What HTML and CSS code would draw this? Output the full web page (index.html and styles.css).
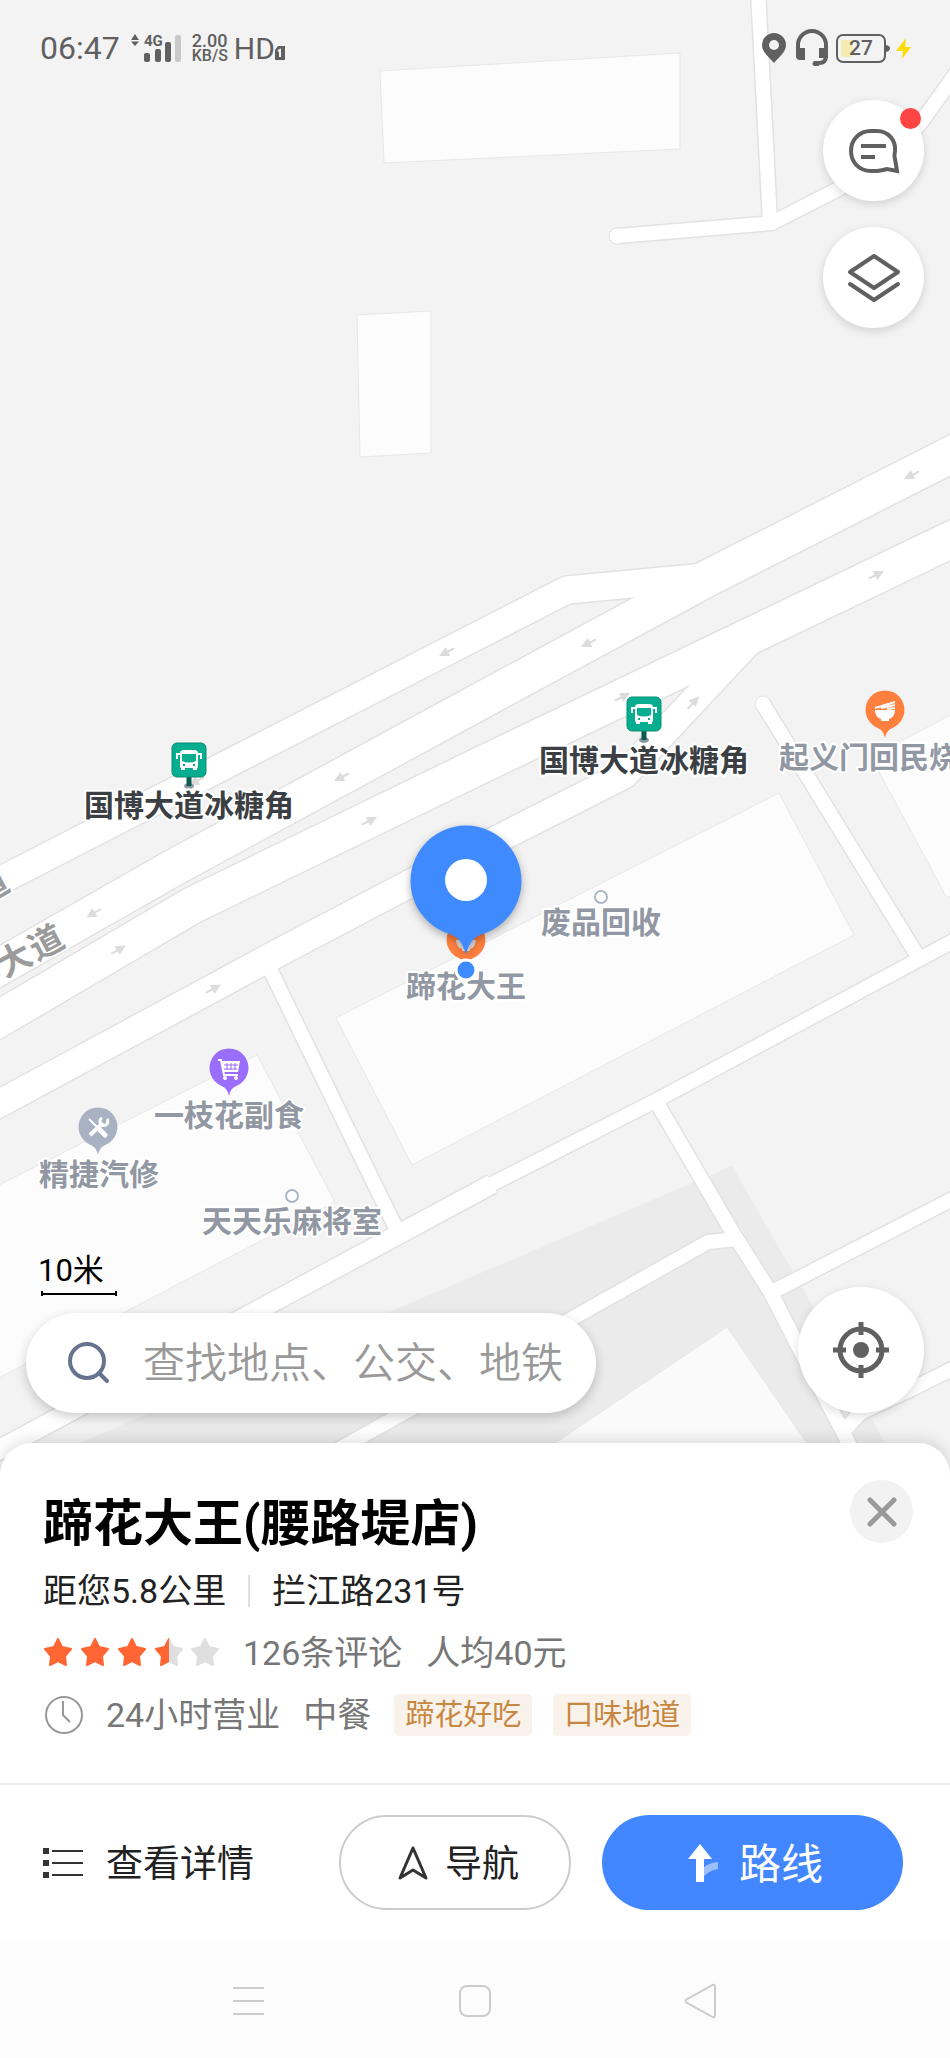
FILE: index.html
```html
<!doctype html>
<html lang="zh-CN">

<head>
    <meta charset="UTF-8">
    <title>蹄花大王(腰路堤店)</title>
    <meta name="viewport" content="width=device-width, initial-scale=1">
    <link rel="stylesheet" href="styles.css">
</head>

<body>
    <div class="page">

        <section class="map">
            <svg class="map-bg" viewBox="0 0 950 1475" preserveAspectRatio="xMidYMin slice">
                <defs>
                    <g id="arrow">
                        <path d="M-8 0H0" stroke="#dcdcdc" stroke-width="2" />
                        <path d="M9 0L-1 -5V5Z" fill="#dcdcdc" />
                    </g>
                    <path id="pin" d="M0 28C-2 19 -6 19 -11 16A19.500 19.500 0 1 1 11 16C6 19 2 19 0 28Z" />
                    <g id="bus">
                        <ellipse cx="0" cy="26" rx="5" ry="3" fill="#8b97a0" />
                        <path d="M0 16V26" stroke="#0c5a50" stroke-width="5" />
                        <rect x="-17" y="-17" width="34" height="34" rx="5" fill="#06ad8f" stroke="#058f77" />
                        <path d="M-9 -7Q-9 -10 -5 -10H5Q9 -10 9 -7V6Q9 8 8 8V10H4V8H-4V10H-8V8Q-9 8 -9 6Z" fill="#fff" />
                        <path d="M-9 -6H-12V-1M9 -6H12V-1" fill="none" stroke="#fff" stroke-width="2" />
                        <path d="M-7 -6H7V1Q0 4 -7 1Z" fill="#06ad8f" />
                        <path d="M-6 5H-4M4 5H6" stroke="#06ad8f" stroke-width="2" />
                    </g>
                    <g id="roads" fill="none" stroke-linejoin="round">
                        <path class="w36" d="M-20 978L173 868L475 704L708 578L990 435M-20 1030L193 905L475 768L990 521" />
                        <path class="w27" d="M-20 891L475 637L567 590L705 577M-20 1114L278 953L413 882L624 775L756 634" />
                        <path class="w19" d="M-20 1460L492 1184" />
                        <path class="w14" d="M758 -9L770 222M617 236L772 223L885 165L922 121L960 68M268 965L348 1130L398 1232M492 1184L657 1100L970 932M763 704L917 955M657 1103L733 1233L771 1293L795 1340L843 1432L862 1470M774 1291L970 1190M738 1239L708 1242L571 1319L300 1471M843 1432L860 1413L912 1389L970 1360" />
                    </g>
                </defs>

                <!-- 地块和建筑 -->
                <rect width="950" height="1475" fill="#f3f3f3" />
                <path d="M732 1166L387 1313L138 1418L40 1460V1480H904L812 1305Z" fill="#ebebeb" />
                <g fill="#fcfcfc" stroke="#e7e7e7">
                    <path d="M380 71L680 53V149L384 163Z" />
                    <path d="M357 315L431 311V453L360 457Z" />
                    <path d="M336 1018L779 793L854 935L412 1165Z" />
                    <path d="M-5 1187L257 1055L335 1202L-5 1380Z" />
                    <path d="M960 710L871 757L947 898L960 891Z" />
                    <path d="M727 1327L505 1477H830Z" fill="#fbfafb" />
                </g>

                <!-- 道路 -->
                <use href="#roads" class="road-edge" />
                <g fill="#fff" stroke="#e2e2e2">
                    <circle cx="617" cy="236" r="8" />
                    <circle cx="763" cy="704" r="8" />
                </g>
                <use href="#roads" class="road-fill" />

                <use href="#arrow" transform="translate(447 652) rotate(153)" />
                <use href="#arrow" transform="translate(342 777) rotate(153)" />
                <use href="#arrow" transform="translate(197 781) rotate(153)" />
                <use href="#arrow" transform="translate(589 643) rotate(153)" />
                <use href="#arrow" transform="translate(912 475) rotate(153)" />
                <use href="#arrow" transform="translate(94 913) rotate(150)" />
                <use href="#arrow" transform="translate(369 821) rotate(-27)" />
                <use href="#arrow" transform="translate(876 575) rotate(-27)" />
                <use href="#arrow" transform="translate(622 697) rotate(-27)" />
                <use href="#arrow" transform="translate(693 703) rotate(-48)" />
                <use href="#arrow" transform="translate(118 950) rotate(-30)" />
                <use href="#arrow" transform="translate(213 989) rotate(-28)" />

                <text class="street" x="-140 -104 -68 -32" transform="translate(65 946) rotate(-28)">国博大道</text>
                <text class="street" x="-140 -104 -68 -32" transform="translate(10 890) rotate(-28)">国博大道</text>

                <!-- 兴趣点 -->
                <use href="#bus" x="189" y="760" />
                <text class="stop" x="189" y="816">国博大道冰糖角</text>
                <use href="#bus" x="644" y="714" />
                <text class="stop" x="644" y="771">国博大道冰糖角</text>

                <g transform="translate(885 710)">
                    <use href="#pin" fill="#ff7f3e" />
                    <path d="M-10 0H10Q10 7 4 9V11H-4V9Q-10 7 -10 0Z" fill="#fff" />
                    <path d="M-10 -2L10 -8M-4 -2L10 -5M2 -1L10 -2" stroke="#fff" stroke-width="2" />
                </g>
                <text class="poi poi-start" x="779" y="768">起义门回民烧烤</text>

                <g fill="#fff" stroke="#acb6c9" stroke-width="2">
                    <circle cx="601" cy="897" r="6" />
                    <circle cx="292" cy="1196" r="6" />
                </g>
                <text class="poi" x="601" y="933">废品回收</text>
                <text class="poi" x="292" y="1232">天天乐麻将室</text>

                <g transform="translate(229 1068)">
                    <use href="#pin" fill="#9b6dfb" />
                    <path d="M-11 -8H-8L-5 7H9" fill="none" stroke="#fff" stroke-width="2" />
                    <path d="M-7 -7H11L9 4H-5Z" fill="#fff" />
                    <path d="M-2 -5V2M2 -5V2M6 -5V2M-5 -3H9M-5 1H8" stroke="#9b6dfb" />
                    <circle cx="-4" cy="10" r="2" fill="#fff" />
                    <circle cx="7" cy="10" r="2" fill="#fff" />
                </g>
                <text class="poi" x="229" y="1126">一枝花副食</text>

                <g transform="translate(98 1127)">
                    <use href="#pin" fill="#a9b2c3" />
                    <path d="M-9 -8L-1 0" stroke="#fff" stroke-width="2" />
                    <path d="M2 3L7 8" stroke="#fff" stroke-width="5" stroke-linecap="round" />
                    <path d="M-8 8L5 -4" stroke="#fff" stroke-width="4" />
                    <path d="M9 -8A4 4 0 1 1 4 -9" fill="none" stroke="#fff" stroke-width="3" />
                </g>
                <text class="poi" x="99" y="1185">精捷汽修</text>

                <!-- 当前选中的点 -->
                <g transform="translate(466 940)">
                    <use href="#pin" fill="#ff7f3e" />
                    <path d="M-10 0H10Q9 8 4 9V11H-4V9Q-9 8 -10 0Z" fill="#e5e0dc" />
                </g>
                <text class="poi" x="466" y="997">蹄花大王</text>
                <path class="marker" d="M466 954C461 938 456 936 444 932A55.500 55.500 0 1 1 488 932C476 936 471 938 466 954Z" />
                <circle cx="466" cy="880" r="21" fill="#fff" />
                <circle cx="466" cy="970" r="10" fill="#3f8aff" stroke="#fff" stroke-width="3" />
            </svg>

            <header class="status">
                <span class="time">06:47</span>
                <svg class="signal" width="40" height="32" viewBox="0 0 40 32">
                    <path d="M4 2L8 8H0ZM4 14L8 9.500H0Z" />
                    <text x="13" y="14">4G</text>
                    <rect x="13" y="21" width="6" height="9" rx="2" />
                    <rect x="24" y="17" width="6" height="13" rx="2" />
                    <rect x="34" y="10" width="6" height="20" rx="2" />
                </svg>
                <svg class="signal-off" width="7" height="32" viewBox="0 0 7 32">
                    <rect y="3" width="6" height="27" rx="2" fill="#c9c9c9" />
                </svg>
                <span class="speed"><b>2.00</b><span>KB/S</span></span>
                <span class="hd">HD</span>
                <svg class="sim" width="10" height="14" viewBox="0 0 10 14">
                    <path d="M3 0H10V14H0V4Z" fill="#606060" />
                    <path d="M3 5L5 4V11" fill="none" stroke="#f3f3f3" stroke-width="2" />
                </svg>
                <svg class="status-right" width="150" height="40" viewBox="0 0 150 40">
                    <path fill-rule="evenodd" d="M12 5A12 12 0 0 0 0 17C0 24 7 29 12 35C17 29 24 24 24 17A12 12 0 0 0 12 5ZM12 12A5 5 0 1 1 12 22A5 5 0 0 1 12 12Z" fill="#606060" />
                    <path d="M36 21V17A14 14 0 0 1 64 17V28Q64 35 57 35H53" fill="none" stroke="#606060" stroke-width="4" />
                    <path d="M34 20H43V32H38Q34 32 34 28ZM57 20H66V30H57ZM52 33H57V38H52Q49 36 52 33Z" fill="#606060" />
                    <rect x="79" y="12" width="12" height="17" rx="2" fill="#f7ecb0" />
                    <rect x="75" y="7" width="48" height="27" rx="6" fill="none" stroke="#606060" stroke-width="2" />
                    <path d="M124 17Q128 18 128 20Q128 23 124 24Z" fill="#606060" />
                    <text x="99" y="27" text-anchor="middle">27</text>
                    <path d="M144 10L134 23H141L140 31L149 19H143Z" fill="#ffdc00" />
                </svg>
            </header>

            <div class="tools">
                <button class="round" aria-label="消息">
                    <svg width="52" height="46" viewBox="0 0 52 46" fill="none" stroke="#606060" stroke-width="4">
                        <path d="M23 3H29C40 3 48 12 47 23Q46 29 47 31L49 43L39 41Q36 42 29 43H23C11 43 3 34 3 23S11 3 23 3Z" />
                        <path d="M13 18H38M13 29H27" />
                    </svg>
                    <span class="dot"></span>
                </button>
                <button class="round" aria-label="图层">
                    <svg width="54" height="50" viewBox="0 0 54 50" fill="none" stroke="#606060" stroke-width="4" stroke-linecap="round" stroke-linejoin="round">
                        <path d="M27 3L51 19L27 35L3 19Z" />
                        <path d="M3 31L27 47L51 31" />
                    </svg>
                </button>
            </div>

            <div class="map-foot">
                <div class="foot-left">
                    <div class="scale">10米<i></i></div>
                    <label class="search">
                        <svg width="42" height="42" viewBox="0 0 42 42" fill="none" stroke="#66738f" stroke-width="4" stroke-linecap="round">
                            <circle cx="19" cy="19" r="17" />
                            <path d="M31 31L39 39" />
                        </svg>
                        <input type="text" placeholder="查找地点、公交、地铁" aria-label="搜索">
                    </label>
                </div>
                <button class="round locate" aria-label="定位">
                    <svg width="56" height="56" viewBox="0 0 56 56" fill="none" stroke="#606060" stroke-width="5">
                        <circle cx="28" cy="28" r="21" />
                        <circle cx="28" cy="28" r="8" fill="#606060" stroke="none" />
                        <path d="M28 0V13M28 43V56M0 28H13M43 28H56" />
                    </svg>
                </button>
            </div>
        </section>

        <section class="sheet">
            <div class="info">
                <div class="head">
                    <h1>蹄花大王(腰路堤店)</h1>
                    <button class="close" aria-label="关闭">
                        <svg width="30" height="30" viewBox="0 0 30 30" stroke="#999" stroke-width="5" stroke-linecap="round">
                            <path d="M3 3L27 27M27 3L3 27" />
                        </svg>
                    </button>
                </div>
                <p class="line addr"><span>距您5.8公里</span><i></i><span>拦江路231号</span></p>
                <p class="line grey">
                    <svg width="176" height="30" viewBox="0 0 176 30">
                        <defs>
                            <path id="star" stroke-width="2" stroke-linejoin="round" d="M15 1L19 9L28 11L22 18L23 27L15 23L7 27L8 18L2 11L11 9Z" />
                            <clipPath id="half"><rect width="15" height="28" /></clipPath>
                        </defs>
                        <g fill="#ff6633" stroke="#ff6633">
                            <use href="#star" />
                            <use href="#star" x="37" />
                            <use href="#star" x="74" />
                        </g>
                        <g fill="#dfdfdf" stroke="#dfdfdf">
                            <use href="#star" x="111" />
                            <use href="#star" x="147" />
                        </g>
                        <g transform="translate(111 0)">
                            <use href="#star" clip-path="url(#half)" fill="#ff6633" stroke="#ff6633" />
                        </g>
                    </svg>
                    <span>126条评论</span><span>人均40元</span>
                </p>
                <p class="line grey">
                    <svg width="40" height="40" viewBox="0 0 40 40" fill="none" stroke="#999" stroke-width="2">
                        <circle cx="21" cy="20" r="18" />
                        <path d="M20 6V20L27 27" />
                    </svg>
                    <span>24小时营业</span><span>中餐</span>
                    <span class="tags"><em>蹄花好吃</em><em>口味地道</em></span>
                </p>
            </div>

            <div class="actions">
                <a class="detail" href="#">
                    <svg width="40" height="30" viewBox="0 0 40 30" fill="#333">
                        <path d="M0 0H6V6H0ZM0 12H6V18H0ZM0 24H6V30H0ZM9 2H40V4H9ZM9 14H40V16H9ZM9 26H40V28H9Z" />
                    </svg>
                    <span>查看详情</span>
                </a>
                <button class="btn navi">
                    <svg width="32" height="36" viewBox="0 0 32 36" fill="none" stroke="#333" stroke-width="3" stroke-linejoin="round">
                        <path d="M16 3L29 33L16 25L3 33Z" />
                    </svg>
                    <span>导航</span>
                </button>
                <button class="btn route">
                    <svg width="30" height="38" viewBox="0 0 30 38">
                        <path d="M15 34V24Q20 19 30 18V25Q19 27 15 34Z" fill="#9cc0ff" />
                        <path d="M12 0L24 15H16V38H8V15H0Z" fill="#fff" />
                    </svg>
                    <span>路线</span>
                </button>
            </div>
        </section>

        <nav class="sysbar">
            <button aria-label="菜单">
                <svg width="34" height="36" viewBox="0 0 34 36"><path d="M1 5H32M1 18H32M1 31H32" /></svg>
            </button>
            <button aria-label="主页">
                <svg width="34" height="36" viewBox="0 0 34 36"><rect x="2" y="3" width="30" height="30" rx="7" /></svg>
            </button>
            <button aria-label="返回">
                <svg width="34" height="36" viewBox="0 0 34 36"><path d="M27 3Q31 0 31 4V32Q31 36 27 33L3 20Q0 18 3 16Z" /></svg>
            </button>
        </nav>

    </div>
</body>

</html>
```
FILE: styles.css
```css
* {
    margin: 0;
    padding: 0;
    box-sizing: border-box;
}

body {
    font-family: Roboto, "Noto Sans CJK SC", sans-serif;
    color: #222;
    background: #fff;
}

button {
    border: none;
    background: none;
    font: inherit;
    color: inherit;
}

svg {
    flex: none;
}

i, em {
    font-style: normal;
}

.page {
    min-height: 100vh;
    display: flex;
    flex-direction: column;
}

/* 地图 */
.map {
    flex: 1;
    min-height: 760px;
    position: relative;
    display: flex;
    flex-direction: column;
    overflow: hidden;
}
.map-bg {
    position: absolute;
    left: 0;
    top: 0;
    width: 100%;
    height: 100%;
}

/* 同一组路画两遍，先描边再填白 */
.w36 { stroke-width: calc(36px + var(--edge)); }
.w27 { stroke-width: calc(27px + var(--edge)); }
.w19 { stroke-width: calc(19px + var(--edge)); }
.w14 { stroke-width: calc(14px + var(--edge)); }
.road-edge {
    --edge: 3px;
    stroke: #e2e2e2;
}
.road-fill {
    --edge: 0px;
    stroke: #fff;
}

.map-bg text {
    font-size: 30px;
    font-weight: 700;
    text-anchor: middle;
    paint-order: stroke;
    stroke: #fff;
    stroke-width: 4px;
    stroke-linejoin: round;
    fill: #9198a3;
}
.map-bg .stop {
    fill: #3b3f44;
}
.map-bg .poi-start {
    text-anchor: start;
}
.map-bg .street {
    font-size: 34px;
    text-anchor: start;
    fill: #9b9b9b;
}
.marker {
    fill: #3f8aff;
    filter: drop-shadow(0 3px 4px rgba(0, 0, 0, .3));
}

/* 状态栏 */
.status {
    position: relative;
    display: flex;
    align-items: center;
    padding: 28px 38px 0 40px;
    height: 68px;
    color: #606060;
}
.status .time {
    font-size: 32px;
    margin-right: 11px;
}
.signal {
    fill: #606060;
}
.signal text {
    font-size: 15px;
    font-weight: 700;
}
.signal-off {
    margin: 0 10px 0 4px;
}
.speed {
    display: flex;
    flex-direction: column;
    font-size: 16px;
    line-height: 15px;
    font-weight: 500;
}
.speed b {
    font-size: 18px;
    font-weight: 500;
}
.hd {
    font-size: 30px;
    margin-left: 6px;
}
.sim {
    margin-top: 9px;
}
.status-right {
    margin-left: auto;
}
.status-right text {
    font-size: 21px;
    font-weight: 500;
    fill: #606060;
}

.tools {
    position: relative;
    display: flex;
    flex-direction: column;
    align-items: flex-end;
    gap: 26px;
    padding: 32px 26px;
}
.round {
    position: relative;
    display: flex;
    align-items: center;
    justify-content: center;
    width: 101px;
    height: 101px;
    border-radius: 50%;
    background: #fff;
    box-shadow: 0 3px 10px rgba(0, 0, 0, .14);
}
.dot {
    position: absolute;
    right: 3px;
    top: 8px;
    width: 21px;
    height: 21px;
    border-radius: 50%;
    background: #ff4444;
}

.map-foot {
    position: relative;
    margin-top: auto;
    display: flex;
    align-items: flex-end;
    justify-content: space-between;
    padding: 0 26px 62px;
}
.foot-left {
    width: 570px;
}
.scale {
    display: inline-flex;
    flex-direction: column;
    margin: 0 0 17px 12px;
    font-size: 31px;
    line-height: 40px;
    color: #000;
}
.scale i {
    width: 76px;
    height: 5px;
    margin-left: 3px;
    border: solid #000;
    border-width: 0 2px;
    background: linear-gradient(#000, #000) center / 100% 2px no-repeat;
}
.search {
    display: flex;
    align-items: center;
    gap: 33px;
    height: 100px;
    padding: 0 26px 0 42px;
    border-radius: 50px;
    background: #fff;
    box-shadow: 0 4px 12px rgba(0, 0, 0, .2);
}
.search input {
    flex: 1;
    min-width: 0;
    border: none;
    outline: none;
    background: none;
    font: inherit;
    font-size: 42px;
}
.search input::placeholder {
    font-weight: 350;
    color: #999;
}
.locate {
    width: 126px;
    height: 126px;
}

/* 详情 */
.sheet {
    position: relative;
    margin-top: -32px;
    border-radius: 32px 32px 0 0;
    background: #fff;
    box-shadow: 0 -2px 16px rgba(0, 0, 0, .14);
}
.info {
    padding: 37px 37px 47px 43px;
    border-bottom: 2px solid #eee;
}
.head {
    display: flex;
    justify-content: space-between;
    margin-bottom: 12px;
}
.head h1 {
    padding-top: 10px;
    font-size: 50px;
    line-height: 68px;
    font-weight: 700;
    color: #000;
}
.close {
    display: flex;
    align-items: center;
    justify-content: center;
    width: 63px;
    height: 63px;
    border-radius: 50%;
    background: #f2f2f2;
}
.line {
    display: flex;
    align-items: center;
    height: 42px;
    margin-bottom: 20px;
    gap: 24px;
    font-size: 34px;
    line-height: 42px;
}
.line:last-child {
    gap: 23px;
    margin-bottom: 0;
}
.addr {
    gap: 22px;
}
.addr i {
    width: 2px;
    height: 32px;
    background: #e0e0e0;
}
.grey {
    color: #777;
}
.tags {
    display: flex;
    gap: 21px;
}
.line em {
    padding: 0 11px;
    border-radius: 5px;
    background: #f8f2eb;
    color: #c88740;
    font-size: 29px;
}

.actions {
    display: flex;
    align-items: center;
    padding: 30px 47px 33px 43px;
    gap: 31px;
}
.actions span {
    padding-bottom: 4px;
}
.detail {
    display: flex;
    align-items: center;
    gap: 23px;
    margin-right: auto;
    font-size: 37px;
    color: #222;
    text-decoration: none;
}
.btn {
    display: flex;
    align-items: center;
    justify-content: center;
    width: 232px;
    height: 95px;
    padding-left: 6px;
    border-radius: 48px;
}
.navi {
    gap: 16px;
    border: 2px solid #ccc;
    font-size: 37px;
}
.route {
    gap: 21px;
    width: 301px;
    background: #4287ff;
    color: #fff;
    font-size: 42px;
}

/* 系统导航 */
.sysbar {
    position: relative;
    display: flex;
    align-items: center;
    justify-content: center;
    gap: 192px;
    height: 115px;
    background: #fcfcfc;
}
.sysbar button {
    display: flex;
}
.sysbar svg {
    fill: none;
    stroke: #ccc;
    stroke-width: 2px;
}
```
